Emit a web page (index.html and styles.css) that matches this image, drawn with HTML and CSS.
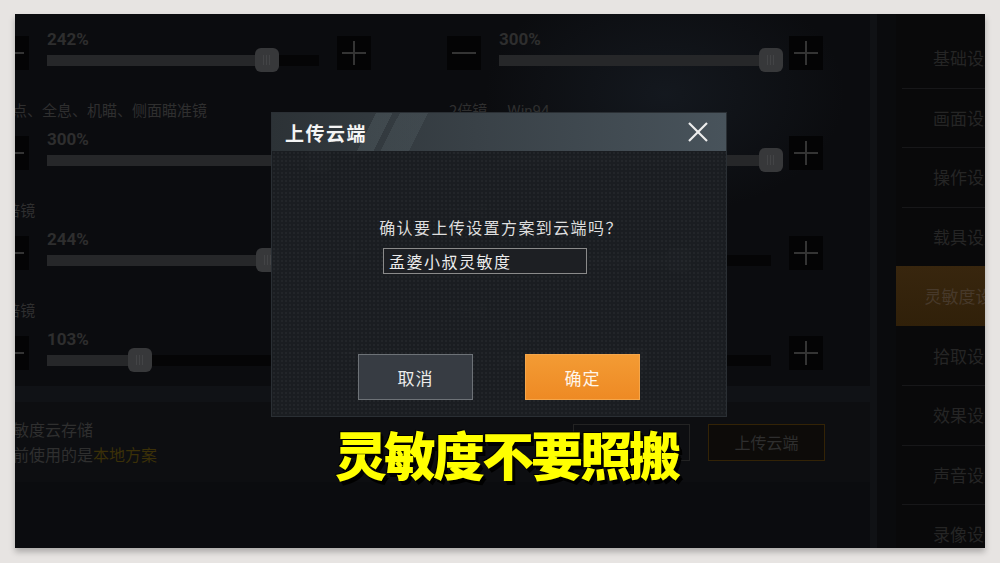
FILE: index.html
```html
<!DOCTYPE html>
<html lang="zh-CN">
<head>
    <meta charset="UTF-8">
    <meta name="viewport" content="width=device-width, initial-scale=1.0">
    <title>灵敏度设置 - 上传云端</title>
    <link rel="stylesheet" href="styles.css">
</head>
<body>
    <div class="frame">
        <div class="screen">
            <div class="game">
                <main class="settings">
                    <div class="groups">
                        <!-- 第1组 -->
                        <div class="group">
                            <div class="col">
                                <div class="col-label"></div>
                                <div class="control">
                                    <div class="step"><svg width="34" height="34"><line x1="5" y1="17" x2="29" y2="17"/></svg></div>
                                    <div class="slider">
                                        <div class="pct">242%</div>
                                        <div class="track"><div class="fill" style="width: 80.7%"></div><div class="thumb" style="left: 80.7%"></div></div>
                                    </div>
                                    <div class="step"><svg width="34" height="34"><line x1="5" y1="17" x2="29" y2="17"/><line x1="17" y1="5" x2="17" y2="29"/></svg></div>
                                </div>
                            </div>
                            <div class="col">
                                <div class="col-label"></div>
                                <div class="control">
                                    <div class="step"><svg width="34" height="34"><line x1="5" y1="17" x2="29" y2="17"/></svg></div>
                                    <div class="slider">
                                        <div class="pct">300%</div>
                                        <div class="track"><div class="fill" style="width: 100%"></div><div class="thumb" style="left: 100%"></div></div>
                                    </div>
                                    <div class="step"><svg width="34" height="34"><line x1="5" y1="17" x2="29" y2="17"/><line x1="17" y1="5" x2="17" y2="29"/></svg></div>
                                </div>
                            </div>
                        </div>
                        <!-- 第2组 -->
                        <div class="group">
                            <div class="col">
                                <div class="col-label">红点、全息、机瞄、侧面瞄准镜</div>
                                <div class="control">
                                    <div class="step"><svg width="34" height="34"><line x1="5" y1="17" x2="29" y2="17"/></svg></div>
                                    <div class="slider">
                                        <div class="pct">300%</div>
                                        <div class="track"><div class="fill" style="width: 100%"></div><div class="thumb" style="left: 100%"></div></div>
                                    </div>
                                    <div class="step"><svg width="34" height="34"><line x1="5" y1="17" x2="29" y2="17"/><line x1="17" y1="5" x2="17" y2="29"/></svg></div>
                                </div>
                            </div>
                            <div class="col">
                                <div class="col-label">2倍镜<span class="gun">Win94</span></div>
                                <div class="control">
                                    <div class="step"><svg width="34" height="34"><line x1="5" y1="17" x2="29" y2="17"/></svg></div>
                                    <div class="slider">
                                        <div class="pct">300%</div>
                                        <div class="track"><div class="fill" style="width: 100%"></div><div class="thumb" style="left: 100%"></div></div>
                                    </div>
                                    <div class="step"><svg width="34" height="34"><line x1="5" y1="17" x2="29" y2="17"/><line x1="17" y1="5" x2="17" y2="29"/></svg></div>
                                </div>
                            </div>
                        </div>
                        <!-- 第3组 -->
                        <div class="group">
                            <div class="col">
                                <div class="col-label">3倍镜</div>
                                <div class="control">
                                    <div class="step"><svg width="34" height="34"><line x1="5" y1="17" x2="29" y2="17"/></svg></div>
                                    <div class="slider">
                                        <div class="pct">244%</div>
                                        <div class="track"><div class="fill" style="width: 81.3%"></div><div class="thumb" style="left: 81.3%"></div></div>
                                    </div>
                                    <div class="step"><svg width="34" height="34"><line x1="5" y1="17" x2="29" y2="17"/><line x1="17" y1="5" x2="17" y2="29"/></svg></div>
                                </div>
                            </div>
                            <div class="col">
                                <div class="col-label">8倍镜</div>
                                <div class="control">
                                    <div class="step"><svg width="34" height="34"><line x1="5" y1="17" x2="29" y2="17"/></svg></div>
                                    <div class="slider">
                                        <div class="pct">198%</div>
                                        <div class="track"><div class="fill" style="width: 66%"></div><div class="thumb" style="left: 66%"></div></div>
                                    </div>
                                    <div class="step"><svg width="34" height="34"><line x1="5" y1="17" x2="29" y2="17"/><line x1="17" y1="5" x2="17" y2="29"/></svg></div>
                                </div>
                            </div>
                        </div>
                        <!-- 第4组 -->
                        <div class="group last">
                            <div class="col">
                                <div class="col-label">4倍镜</div>
                                <div class="control">
                                    <div class="step"><svg width="34" height="34"><line x1="5" y1="17" x2="29" y2="17"/></svg></div>
                                    <div class="slider">
                                        <div class="pct">103%</div>
                                        <div class="track"><div class="fill" style="width: 34.3%"></div><div class="thumb" style="left: 34.3%"></div></div>
                                    </div>
                                    <div class="step"><svg width="34" height="34"><line x1="5" y1="17" x2="29" y2="17"/><line x1="17" y1="5" x2="17" y2="29"/></svg></div>
                                </div>
                            </div>
                            <div class="col">
                                <div class="col-label">6倍镜</div>
                                <div class="control">
                                    <div class="step"><svg width="34" height="34"><line x1="5" y1="17" x2="29" y2="17"/></svg></div>
                                    <div class="slider">
                                        <div class="pct">150%</div>
                                        <div class="track"><div class="fill" style="width: 50%"></div><div class="thumb" style="left: 50%"></div></div>
                                    </div>
                                    <div class="step"><svg width="34" height="34"><line x1="5" y1="17" x2="29" y2="17"/><line x1="17" y1="5" x2="17" y2="29"/></svg></div>
                                </div>
                            </div>
                        </div>
                    </div>

                    <div class="divider"></div>

                    <div class="cloud">
                        <div class="cloud-text">
                            <div>灵敏度云存储</div>
                            <div>当前使用的是<span class="local">本地方案</span></div>
                        </div>
                        <div class="cloud-actions">
                            <div class="cloud-btn">云端方案管理</div>
                            <div class="cloud-btn upload">上传云端</div>
                        </div>
                    </div>
                </main>

                <div class="gutter"></div>

                <nav class="sidebar">
                    <div class="nav-item">基础设置</div>
                    <div class="nav-item sep">画面设置</div>
                    <div class="nav-item sep">操作设置</div>
                    <div class="nav-item sep">载具设置</div>
                    <div class="nav-item active">灵敏度设置</div>
                    <div class="nav-item">拾取设置</div>
                    <div class="nav-item sep">效果设置</div>
                    <div class="nav-item sep">声音设置</div>
                    <div class="nav-item sep">录像设置</div>
                </nav>
            </div>

            <!-- 弹窗 -->
            <div class="dialog">
                <div class="dialog-head">
                    <span class="dialog-title">上传云端</span>
                    <svg class="close" width="20" height="20" viewBox="0 0 20 20"><line x1="1" y1="1" x2="19" y2="19"/><line x1="19" y1="1" x2="1" y2="19"/></svg>
                </div>
                <div class="dialog-body">
                    <div class="question">确认要上传设置方案到云端吗？</div>
                    <div class="name-input">孟婆小叔灵敏度</div>
                    <div class="dialog-actions">
                        <div class="btn cancel">取消</div>
                        <div class="btn confirm">确定</div>
                    </div>
                </div>
            </div>

            <div class="caption">灵敏度不要照搬</div>
        </div>
    </div>
</body>
</html>
```

FILE: styles.css
```css
body {
    margin: 0;
    background: #e7e4e2;
    font-family: "Noto Sans CJK SC", "Noto Sans", sans-serif;
}
.frame {
    padding: 14px 15px;
}
.screen {
    position: relative;
    width: 970px;
    height: 534px;
    overflow: hidden;
    background: #0b0c0f;
    box-shadow: 0 4px 6px rgba(0,0,0,0.25);
}
.game {
    display: flex;
    height: 100%;
}

/* 左侧设置区 */
.settings {
    width: 855px;
    flex-shrink: 0;
    display: flex;
    flex-direction: column;
    background:
        radial-gradient(ellipse 180px 120px at 650px 80px, rgba(40,52,66,0.3), transparent),
        #0b0c0f;
}
.groups {
    margin: -14px 0 0 -20px;
}
.group {
    display: grid;
    grid-template-columns: 376px 376px;
    column-gap: 76px;
    height: 100px;
}
.group.last {
    height: 86px;
}
.col-label {
    height: 20px;
    line-height: 20px;
    font-size: 15px;
    color: #2f2f2f;
    white-space: nowrap;
    padding-left: 2px;
}
.col-label .gun {
    margin-left: 20px;
    font-family: Roboto, sans-serif;
}
.control {
    display: flex;
    align-items: flex-start;
    margin-top: 11px;
}
.step {
    width: 34px;
    height: 34px;
    margin-top: 5px;
    background: #040405;
    flex-shrink: 0;
}
.step svg line {
    stroke: #343434;
    stroke-width: 2;
}
.slider {
    width: 272px;
    margin: 0 18px;
}
.pct {
    font: 700 17px/17px Roboto, sans-serif;
    color: #2e2e2e;
}
.track {
    position: relative;
    height: 11px;
    margin-top: 7px;
    background: #050506;
}
.fill {
    height: 100%;
    background: #262729;
}
.thumb {
    position: absolute;
    top: -7px;
    width: 24px;
    height: 24px;
    margin-left: -12px;
    border-radius: 6px;
    background: #37383a;
}
.thumb::after {
    content: "";
    position: absolute;
    left: 8px;
    top: 7px;
    width: 9px;
    height: 10px;
    background: repeating-linear-gradient(90deg, #434446 0 1px, transparent 1px 3px);
}

.divider {
    height: 16px;
    background: #101216;
}
.cloud {
    height: 80px;
    display: flex;
    align-items: center;
    padding-right: 45px;
    background: #0d0e11;
}
.cloud-text {
    margin-left: -18px;
    font-size: 16px;
    line-height: 25px;
    color: #2f2f2f;
}
.cloud-text .local {
    color: #3b3008;
}
.cloud-actions {
    margin-left: auto;
    display: flex;
    gap: 18px;
}
.cloud-btn {
    width: 117px;
    height: 37px;
    box-sizing: border-box;
    border: 1px solid #232323;
    display: flex;
    align-items: center;
    justify-content: center;
    font-size: 16px;
    color: #2a2a2a;
}
.cloud-btn.upload {
    border-color: #332306;
    background: #0d0b09;
    color: #2e2e2e;
}

.gutter {
    width: 26px;
    flex-shrink: 0;
    background: linear-gradient(90deg, #101215 0 7px, #0a0b0d 7px);
}

/* 右侧菜单 */
.sidebar {
    flex: 1;
    padding-top: 14px;
    background: #09090a;
}
.nav-item {
    width: 142px;
    height: 59.5px;
    line-height: 59.5px;
    text-align: center;
    font-size: 17px;
    color: #252525;
}
.nav-item.sep {
    background: linear-gradient(#171719, #171719) no-repeat 6px 0 / 100% 1px;
}
.nav-item.active {
    background: linear-gradient(180deg, #38260e, #302009);
    color: #47392a;
}

/* 弹窗 */
.dialog {
    position: absolute;
    left: 256px;
    top: 98px;
    width: 456px;
    height: 305px;
    box-sizing: border-box;
    border: 1px solid #2a2f34;
    display: flex;
    flex-direction: column;
}
.dialog-head {
    height: 38px;
    flex-shrink: 0;
    display: flex;
    align-items: center;
    padding: 0 18px 0 13px;
    background:
        linear-gradient(117deg, transparent 0 22%, rgba(110,125,130,0.22) 22% 25.5%, transparent 25.5% 27%, rgba(110,125,130,0.18) 27% 33%, transparent 33%),
        linear-gradient(90deg, #2c3236, #394147 45%, #48535b);
}
.dialog-title {
    font-size: 19px;
    font-weight: 700;
    letter-spacing: 1.5px;
    color: #f4f4f4;
}
.close {
    margin-left: auto;
}
.close line {
    stroke: #eeeeee;
    stroke-width: 2.2;
}
.dialog-body {
    flex: 1;
    display: flex;
    flex-direction: column;
    align-items: center;
    padding-top: 66px;
    background:
        radial-gradient(rgba(255,255,255,0.035) 1px, transparent 1px) 0 0 / 4px 4px,
        rgba(27,30,34,0.96);
}
.question {
    height: 20px;
    line-height: 20px;
    font-size: 16px;
    letter-spacing: 1.4px;
    color: #dedede;
    padding-left: 4px;
}
.name-input {
    align-self: flex-start;
    margin: 11px 0 0 111px;
    width: 204px;
    height: 26px;
    box-sizing: border-box;
    border: 1px solid #8a8a8a;
    background: #1d1f23;
    padding-left: 5px;
    line-height: 24px;
    font-size: 16px;
    letter-spacing: 1.5px;
    color: #ececec;
}
.dialog-actions {
    display: flex;
    gap: 52px;
    margin-top: 80px;
}
.btn {
    width: 115px;
    height: 46px;
    box-sizing: border-box;
    display: flex;
    align-items: center;
    justify-content: center;
    font-size: 17px;
    letter-spacing: 1px;
    color: #ececec;
}
.cancel {
    background: #373c43;
    border: 1px solid #6d7277;
}
.confirm {
    background: linear-gradient(180deg, #f39b34, #ee8a24);
    border: 1px solid #f5a64a;
    color: #fff6ea;
}

/* 字幕 */
.caption {
    position: absolute;
    left: 320px;
    top: 414px;
    font-size: 52px;
    line-height: 52px;
    font-weight: 900;
    letter-spacing: -3px;
    color: #ffff00;
    white-space: nowrap;
    text-shadow: 3px 4px 0 #000, 2px 2px 0 #000, -1px -1px 0 #000;
}
```
